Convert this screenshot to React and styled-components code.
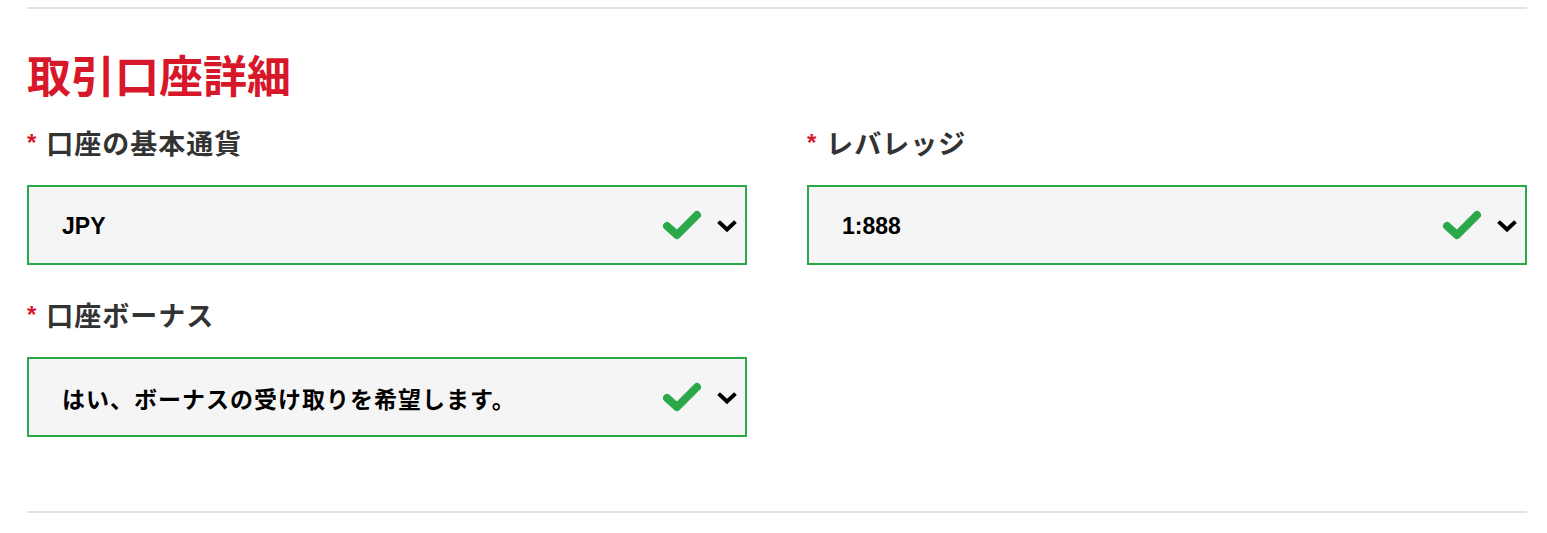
import styled, { createGlobalStyle } from 'styled-components'

const GlobalStyle = createGlobalStyle`
  body {
    margin: 0;
    background: #fff;
    font-family: "Noto Sans CJK JP", "Noto Sans", sans-serif;
  }
`

const Page = styled.div`
  padding: 7px 20px 0 27px;
`

const Section = styled.section`
  width: 1500px;
  border-top: 2px solid #e2e2e2;
  border-bottom: 2px solid #e2e2e2;
  padding: 39px 0 74px 0;
`

const Title = styled.h2`
  margin: 0 0 26px 0;
  font-size: 44px;
  line-height: 52px;
  font-weight: 700;
  color: #d7182a;
`

const Grid = styled.div`
  display: grid;
  grid-template-columns: 720px 720px;
  column-gap: 60px;
  row-gap: 33px;
`

const Field = styled.div`
  display: flex;
  flex-direction: column;
`

const Label = styled.label`
  display: flex;
  align-items: center;
  height: 32px;
  margin-bottom: 27px;
  font-size: 27px;
  font-weight: 700;
  letter-spacing: 1px;
  color: #333;
`

const Required = styled.span`
  color: #d7182a;
  font-family: "Liberation Sans", Arial, sans-serif;
  font-size: 24px;
  margin-right: 9px;
  position: relative;
  top: 1px;
`

const SelectBox = styled.div`
  box-sizing: border-box;
  height: 80px;
  border: 2px solid #2ba84a;
  background: #f5f5f5;
  display: flex;
  align-items: center;
  padding: 0 8px 0 33px;
`

const Value = styled.span`
  flex: 1;
  font-family: "Liberation Sans", "Noto Sans CJK JP", sans-serif;
  font-size: 23px;
  font-weight: 700;
  letter-spacing: ${(props) => (props.$cjk ? '1px' : '0')};
  color: #000;
  position: relative;
  top: 1px;
`

const Icons = styled.div`
  display: flex;
  align-items: center;
  gap: 15px;
`

const Check = () => (
  <svg width="40" height="32" viewBox="0 0 40 32">
    <polyline points="5,17 15,26 35,6" fill="none" stroke="#2ba84a" strokeWidth="8" strokeLinecap="round" strokeLinejoin="round" />
  </svg>
)

const Chevron = () => (
  <svg width="20" height="13" viewBox="0 0 20 13" style={{ marginTop: 2 }}>
    <polyline points="3,3 10,9.5 17,3" fill="none" stroke="#000" strokeWidth="4" strokeLinecap="square" />
  </svg>
)

const Select = ({ label, value, cjk }) => (
  <Field>
    <Label>
      <Required>*</Required>
      {label}
    </Label>
    <SelectBox>
      <Value $cjk={cjk}>{value}</Value>
      <Icons>
        <Check />
        <Chevron />
      </Icons>
    </SelectBox>
  </Field>
)

const App = () => (
  <Page>
    <GlobalStyle />
    <Section>
      <Title>取引口座詳細</Title>
      <Grid>
        <Select label="口座の基本通貨" value="JPY" />
        <Select label="レバレッジ" value="1:888" />
        <Select label="口座ボーナス" value="はい、ボーナスの受け取りを希望します。" cjk />
      </Grid>
    </Section>
  </Page>
)

export default App
